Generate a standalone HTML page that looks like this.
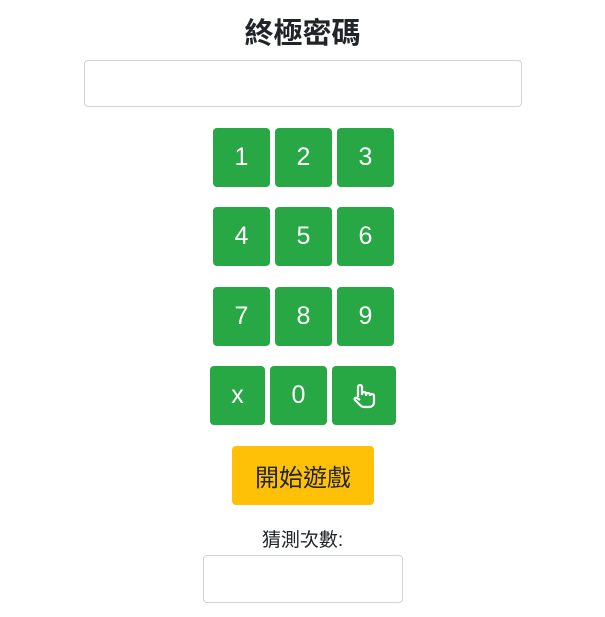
<!DOCTYPE html><html><head><style>
body{margin:0;background:#fff;font-family:"Liberation Sans","Noto Sans CJK TC",sans-serif;}
.a{position:absolute;box-sizing:border-box}
.b{position:absolute;background:#28a745;color:#fff;border-radius:4px;font-size:25px;display:flex;align-items:center;justify-content:center;height:59px}
.inp{position:absolute;border:1px solid #ced4da;border-radius:4px;box-sizing:border-box;background:#fff}
</style></head><body>
<div class="a" style="left:0;width:605px;top:15px;text-align:center;font-size:29px;font-weight:bold;color:#212529;line-height:38px">終極密碼</div>
<div class="inp" style="left:84px;top:60px;width:438px;height:47px"></div>
<div class="b" style="left:213px;top:128px;width:57px">1</div>
<div class="b" style="left:275px;top:128px;width:57px">2</div>
<div class="b" style="left:337px;top:128px;width:57px">3</div>
<div class="b" style="left:213px;top:207px;width:57px">4</div>
<div class="b" style="left:275px;top:207px;width:57px">5</div>
<div class="b" style="left:337px;top:207px;width:57px">6</div>
<div class="b" style="left:213px;top:287px;width:57px">7</div>
<div class="b" style="left:275px;top:287px;width:57px">8</div>
<div class="b" style="left:337px;top:287px;width:57px">9</div>
<div class="b" style="left:210px;top:366px;width:55px">x</div>
<div class="b" style="left:270px;top:366px;width:57px">0</div>
<div class="b" style="left:332px;top:366px;width:64px"><svg width="24" height="26" viewBox="0 0 24 26" fill="none" stroke="#fff" stroke-width="2.2" stroke-linejoin="round"><path d="M6 14V4a2 2 0 0 1 4 0v8 M10 11a2 2 0 0 1 4 0v2 M14 12a2 2 0 0 1 4 0v1 M18 13a2 2 0 0 1 4 0v6c0 3-2 5-5 5h-5c-2 0-3-1-4-2l-5-5c-1-1 0-3 2-2l3 2"/></svg></div>
<div class="a" style="left:232px;top:446px;width:142px;height:59px;background:#ffc107;border-radius:4px;color:#212529;font-size:24px;display:flex;align-items:center;justify-content:center">開始遊戲</div>
<div class="a" style="left:0;width:605px;top:528px;text-align:center;font-size:19px;color:#212529;line-height:26px">猜測次數:</div>
<div class="inp" style="left:203px;top:555px;width:200px;height:48px"></div>
</body></html>
